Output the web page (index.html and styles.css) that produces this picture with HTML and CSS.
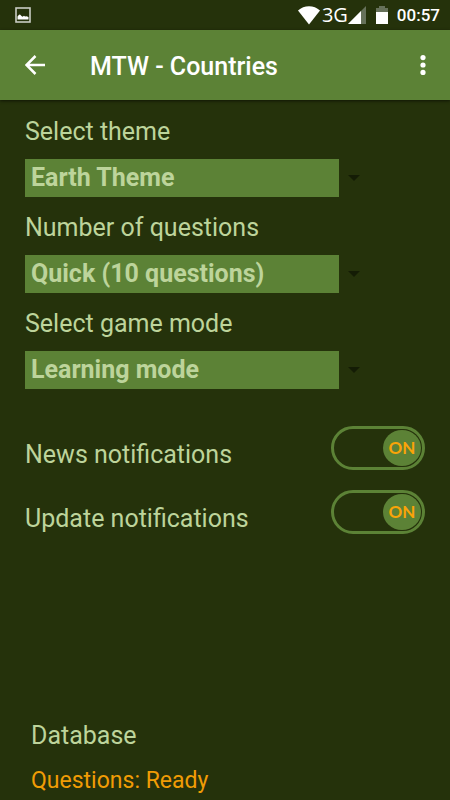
FILE: index.html
```html
<!DOCTYPE html>
<html lang="en">
<head>
<meta charset="utf-8">
<meta name="viewport" content="width=device-width, initial-scale=1">
<title>MTW - Countries</title>
<link rel="stylesheet" href="styles.css">
</head>
<body>
<div class="status">
  <svg class="status-picture" width="16" height="16" viewBox="0 0 16 16" aria-hidden="true">
    <rect x="1" y="1" width="14" height="14" fill="none" stroke="#c9ccc4" stroke-width="1.6"/>
    <path d="M2.500 12.500V9.500l1.500-1.700 1-.3 1.500 1.500 1 .8 1.500-1 1 .7 1.500-.3 2 .8v2.500z" fill="#fff"/>
  </svg>
  <div class="status-right">
    <svg width="22" height="19" viewBox="0 0 22 19" aria-hidden="true"><path d="M0 4.500C3 1.800 7 .3 11 .3s8 1.500 11 4.200L11 18.500z" fill="#fff"/></svg>
    <span class="network">3G</span>
    <svg width="18" height="18" viewBox="0 0 18 18" aria-hidden="true"><path d="M0 18L18 0v18z" fill="#66715a"/><path d="M0 18L13 5v13z" fill="#fff"/></svg>
    <svg class="battery" width="12" height="18" viewBox="0 0 12 18" aria-hidden="true"><path d="M0 2h3V0h6v2h3v5H0z" fill="#66715a"/><path d="M0 6h12v12H0z" fill="#fff"/></svg>
    <time class="clock">00:57</time>
  </div>
</div>
<header class="appbar">
  <button class="icon-button" type="button" aria-label="Back">
    <svg width="20" height="20" viewBox="0 0 20 20" aria-hidden="true"><path d="M20 10H2M10.500 1L1.500 10l9 9" fill="none" stroke="#fff" stroke-width="2.500"/></svg>
  </button>
  <h1>MTW - Countries</h1>
  <button class="icon-button" type="button" aria-label="More options">
    <svg width="6" height="20" viewBox="0 0 6 20" aria-hidden="true"><g fill="#fff"><circle cx="3" cy="2.600" r="2.600"/><circle cx="3" cy="10" r="2.600"/><circle cx="3" cy="17.400" r="2.600"/></g></svg>
  </button>
</header>
<main>
  <form>
    <div class="field">
      <label for="theme">Select theme</label>
      <div class="picker"><select id="theme"><option>Earth Theme</option></select></div>
    </div>
    <div class="field">
      <label for="count">Number of questions</label>
      <div class="picker"><select id="count"><option>Quick (10 questions)</option></select></div>
    </div>
    <div class="field">
      <label for="mode">Select game mode</label>
      <div class="picker"><select id="mode"><option>Learning mode</option></select></div>
    </div>
    <div class="toggles">
      <label class="toggle-row">
        <span>News notifications</span>
        <span class="toggle"><input type="checkbox" checked><span class="thumb">ON</span></span>
      </label>
      <label class="toggle-row">
        <span>Update notifications</span>
        <span class="toggle"><input type="checkbox" checked><span class="thumb">ON</span></span>
      </label>
    </div>
  </form>
  <section class="database">
    <h2>Database</h2>
    <p>Questions: Ready</p>
  </section>
</main>
</body>
</html>
```
FILE: styles.css
```css
* { box-sizing: border-box; }

body {
  margin: 0;
  min-height: 100vh;
  display: flex;
  flex-direction: column;
  background: #25320b;
  color: #bdd49b;
  font-family: Roboto, "Liberation Sans", sans-serif;
  font-size: 25px;
  line-height: 30px;
}

svg { display: block; }

.status {
  display: flex;
  align-items: center;
  justify-content: space-between;
  height: 30px;
  padding: 0 10px 0 15px;
  color: #fff;
}

.status-right { display: flex; align-items: center; }

.network {
  margin: 0 0 0 2px;
  font-family: "Open Sans", sans-serif;
  font-size: 20px;
}

.battery { margin: 0 9px 0 10px; }

.clock { font-size: 17px; font-weight: 500; }

.appbar {
  display: flex;
  align-items: center;
  height: 70px;
  padding: 0 10px;
  background: #5c8236;
  box-shadow: 0 1px 3px rgba(0, 0, 0, 0.6);
}

.icon-button {
  display: grid;
  place-items: center;
  width: 50px;
  height: 50px;
  padding: 0;
  border: 0;
  background: none;
}

.appbar .icon-button:last-child { width: 35px; }

h1 {
  flex: 1;
  margin: 0 0 0 30px;
  padding-top: 4px;
  color: #fff;
  font-size: 25px;
  font-weight: 500;
}

main {
  flex: 1;
  display: flex;
  flex-direction: column;
  justify-content: space-between;
  padding: 17px 25px 4px;
}

.field { margin-bottom: 16px; }

.field label {
  display: block;
  margin-bottom: 12px;
}

.picker {
  display: flex;
  align-items: center;
  gap: 9px;
  margin-right: 65px;
}

.picker::after {
  content: "";
  border: 6px solid transparent;
  border-top-color: #141c05;
  border-bottom: 0;
}

select {
  flex: 1;
  min-width: 0;
  height: 38px;
  padding: 0 6px;
  appearance: none;
  border: 0;
  border-radius: 0;
  background: #5c8236;
  color: #bdd49b;
  font: 700 25px/38px Roboto, "Liberation Sans", sans-serif;
}

.toggles {
  display: grid;
  gap: 20px;
  margin-top: 37px;
}

.toggle-row {
  display: flex;
  align-items: flex-end;
  justify-content: space-between;
}

.toggle {
  position: relative;
  display: flex;
  justify-content: flex-end;
  width: 94px;
  height: 44px;
  padding: 1px;
  border: 3px solid #5c8236;
  border-radius: 22px;
}

.toggle input {
  position: absolute;
  inset: 0;
  width: 100%;
  height: 100%;
  margin: 0;
  opacity: 0;
}

.thumb {
  width: 38px;
  height: 36px;
  border-radius: 50%;
  background: #5c8236;
  color: #faa408;
  font: 700 17px/36px Lato, sans-serif;
  text-align: center;
}

.database { padding: 0 6px; }

.database h2 {
  margin: 0 0 15px;
  font-size: 25px;
  font-weight: 400;
}

.database p {
  margin: 0;
  color: #f09c05;
  font-size: 23px;
}
```
